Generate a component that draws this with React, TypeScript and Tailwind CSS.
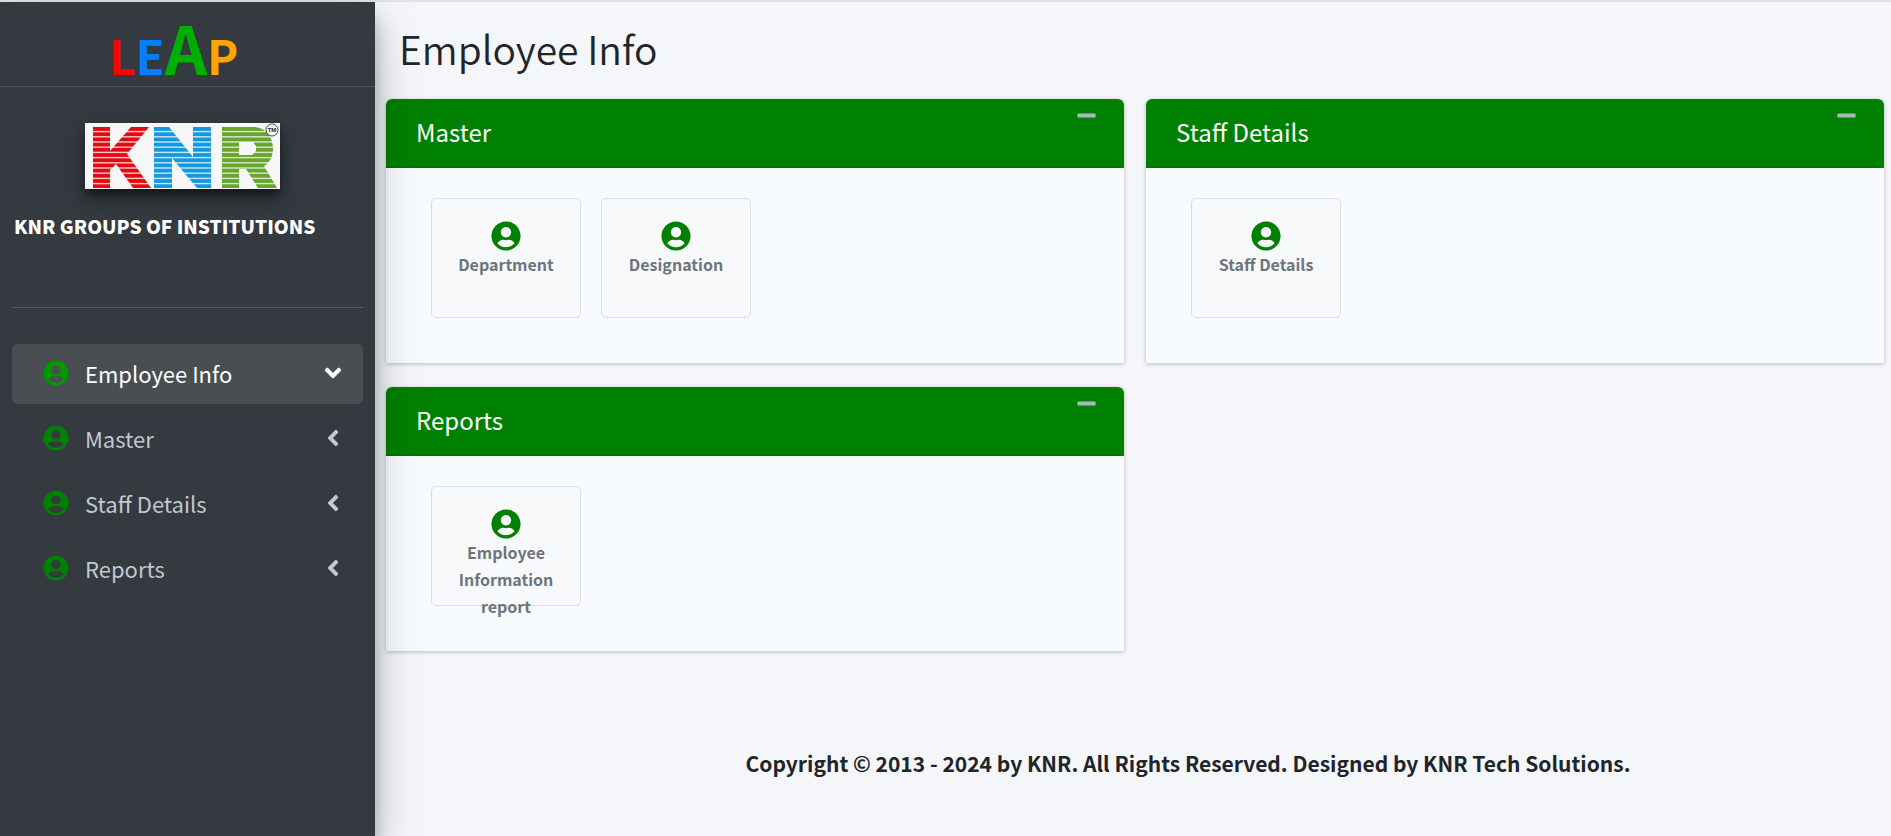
import React, { useState } from "react";
import { FaAngleDown, FaAngleLeft, FaMinus, FaUserCircle } from "react-icons/fa";

const menuItems = ["Employee Info", "Master", "Staff Details", "Reports"];

const cards = [
  { title: "Master", tiles: ["Department", "Designation"] },
  { title: "Staff Details", tiles: ["Staff Details"] },
  { title: "Reports", tiles: ["Employee Information report"] },
];

const stripes = [0, 1, 2, 3, 4, 5, 6, 7, 8, 9, 10];

const KnrLogo = () => (
  <svg
    viewBox="0 0 195 66"
    role="img"
    aria-label="KNR"
    className="block h-[66px] w-[195px] bg-[#f7f7f7] shadow-[0_10px_20px_rgba(0,0,0,0.38),0_6px_6px_rgba(0,0,0,0.35)]"
  >
    {/* K */}
    <path
      fill="#e30b13"
      d="M8 4h17v24L46 4h18L42 31 66 65H48L31 41l-6 6v18H8z"
    />
    {/* N */}
    <path
      fill="#1499e0"
      d="M69 4h15l24 30V4h18v61h-14L87 35v30H69z"
    />
    {/* R */}
    <path
      fill="#67a52c"
      fillRule="evenodd"
      d="M137 4h33c11 1 18 10 18 22 0 8-4 14-9 17l13 22h-19l-12-19h-7v19h-17zM154 19v13h13l4-4v-5l-3-4z"
    />
    {stripes.map((n) => (
      <rect key={n} x="7" y={7.9 + n * 5.2} width="186" height="1.4" fill="#f7f7f7" opacity="0.8" />
    ))}
    <circle cx="187" cy="7" r="6" fill="#f7f7f7" stroke="#333" strokeWidth="0.9" />
    <text x="187" y="9" textAnchor="middle" fontSize="6" fontWeight="700" fill="#222" fontFamily="Liberation Sans, sans-serif">
      TM
    </text>
  </svg>
);

const Sidebar = () => {
  const [active, setActive] = useState("Employee Info");

  return (
    <aside className="relative z-10 w-[375px] shrink-0 bg-[#343a40] shadow-[0_21px_42px_rgba(0,0,0,0.25),0_15px_15px_rgba(0,0,0,0.22)]">
      {/* Brand */}
      <a
        href="#"
        aria-label="LEAP"
        className="flex h-[85px] items-baseline justify-center border-b border-[#4b545c] pr-7 text-[47px] leading-[88px] font-bold"
      >
        <span className="text-[#ff0000]">L</span>
        <span className="text-[#007fff]">E</span>
        <span className="text-[66px] text-[#00b000]">A</span>
        <span className="text-[#ffa500]">P</span>
      </a>

      <div className="px-3">
        <div className="flex h-[221px] flex-col border-b border-[#4f5962] pt-9">
          <div className="pl-[73px]">
            <KnrLogo />
          </div>
          <a href="#" className="mt-[19px] pl-0.5 text-[19px] leading-9 font-black whitespace-nowrap text-white">
            KNR GROUPS OF INSTITUTIONS
          </a>
        </div>

        {/* Menu */}
        <nav className="mt-9 flex flex-col gap-[5px]">
          {menuItems.map((item) => (
            <button
              key={item}
              type="button"
              onClick={() => setActive(item)}
              className={
                item === active
                  ? "flex h-[60px] items-center rounded-md bg-[#494e52] pr-[17px] pb-[3px] pl-[31px] text-white"
                  : "flex h-[60px] items-center rounded-md pr-[17px] pb-[3px] pl-[31px] text-[#c2c7d0]"
              }
            >
              <FaUserCircle className={item === active ? "size-[26px] text-[#009900]" : "size-[26px] text-[#008000]"} />
              <span className="ml-4 flex-1 text-left text-[22px] leading-9">{item}</span>
              {item === active ? <FaAngleDown className="size-[26px]" /> : <FaAngleLeft className="size-[26px]" />}
            </button>
          ))}
        </nav>
      </div>
    </aside>
  );
};

const Tile = ({ label }: { label: string }) => (
  <a
    href="#"
    className="flex h-[120px] w-[150px] flex-col items-center rounded-[5px] border border-[#dddddd] bg-[#f8f9fa] px-2 pt-[22px] text-center text-[16px] leading-[27px] font-bold text-[#6c757d]"
  >
    <FaUserCircle className="size-[30px] shrink-0 text-[#008000]" />
    <span>{label}</span>
  </a>
);

const Card = ({ title, tiles }: { title: string; tiles: string[] }) => {
  const [open, setOpen] = useState(true);

  return (
    <section className="self-start rounded-t-md bg-[#f8fbfe] shadow-[0_1px_4px_rgba(0,0,0,0.25)]">
      <header className="flex h-[69px] items-start justify-between rounded-t-md border-b border-[#007000] bg-[#008000] pr-[27px] pl-[30px] text-white">
        <h3 className="pt-[15px] text-[24px] leading-9">{title}</h3>
        <button
          type="button"
          aria-label={`Collapse ${title}`}
          onClick={() => setOpen(!open)}
          className="pt-[6px] text-[#adb5bd]"
        >
          <FaMinus className="size-[21px]" />
        </button>
      </header>
      {open && (
        <div className="flex h-[195px] flex-wrap gap-5 px-[45px] pt-[30px]">
          {tiles.map((tile) => (
            <Tile key={tile} label={tile} />
          ))}
        </div>
      )}
    </section>
  );
};

const App = () => {
  return (
    <div className="flex min-h-screen border-t-2 border-[#e1e3e2] bg-[#f4f6f9] font-['Noto_Sans_CJK_JP',sans-serif] text-[#212529]">
      <Sidebar />
      <main className="flex-1">
        <h1 className="pt-[22px] pl-6 text-[39px] leading-[49px] font-[350]">Employee Info</h1>
        <div className="mt-[26px] grid grid-cols-2 gap-x-[22px] gap-y-6 pr-[7px] pl-[11px]">
          {cards.map((card) => (
            <Card key={card.title} title={card.title} tiles={card.tiles} />
          ))}
        </div>
        <footer className="pt-[94px] pr-2 pl-[118px] text-center text-[21px] leading-9 font-bold">
          Copyright © 2013 - 2024 by KNR. All Rights Reserved. Designed by KNR Tech Solutions.
        </footer>
      </main>
    </div>
  );
};

export default App;
